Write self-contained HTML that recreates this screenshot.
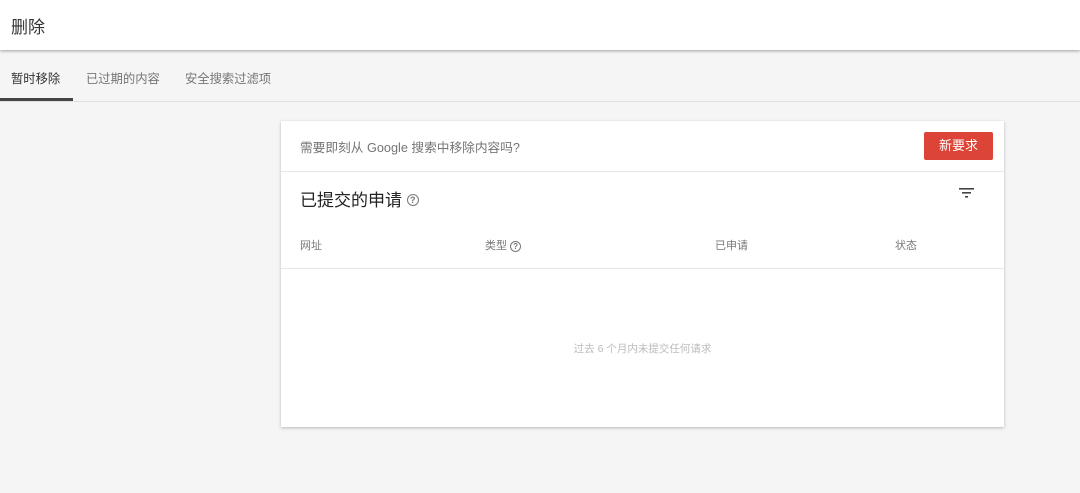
<!DOCTYPE html>
<html><head><meta charset="utf-8"><style>
*{margin:0;padding:0;box-sizing:border-box}
body{width:1080px;height:493px;background:#f5f5f5;font-family:"Liberation Sans","Noto Sans CJK SC",sans-serif;position:relative;overflow:hidden}
.top{position:absolute;left:0;top:0;width:1080px;height:50px;background:#fff;box-shadow:0 1px 3px rgba(0,0,0,.35)}
.top span{position:absolute;left:11px;top:13px;font-size:17px;color:#333}
.tabs{position:absolute;top:50px;left:0;width:1080px;height:52px;border-bottom:1px solid #e0e0e0}
.tab{position:absolute;top:19px;font-size:12.3px;color:#757575}
.ul{position:absolute;left:0;top:48px;width:73px;height:3px;background:#444}
.card{position:absolute;left:281px;top:121px;width:723px;height:306px;background:#fff;box-shadow:0 1px 3px rgba(0,0,0,.25)}
.a{position:absolute;left:19px;top:16px;font-size:12.7px;color:#757575}
.btn{position:absolute;left:643px;top:11px;width:69px;height:28px;background:#db4437;border-radius:2px;color:#fff;font-size:13px;text-align:center;line-height:28px}
.line{position:absolute;left:0;width:723px;height:1px;background:#e6e6e6}
.h{position:absolute;left:19px;top:65px;font-size:17px;color:#222}
.q{display:inline-block;width:12px;height:12px;border:1.3px solid #777;border-radius:50%;font-size:9px;line-height:10px;text-align:center;color:#777;vertical-align:middle;font-weight:bold}
.th{position:absolute;top:116px;font-size:11px;color:#777}
.empty{position:absolute;left:0;width:723px;top:220px;text-align:center;font-size:10.5px;color:#bbb}
</style></head><body>
<div class="top"><span>删除</span></div>
<div class="tabs">
<div class="tab" style="left:11px;color:#333">暂时移除</div>
<div class="tab" style="left:86px">已过期的内容</div>
<div class="tab" style="left:185px">安全搜索过滤项</div>
<div class="ul"></div>
</div>
<div class="card">
<div class="a">需要即刻从 Google 搜索中移除内容吗?</div>
<div class="btn">新要求</div>
<div class="line" style="top:50px"></div>
<div class="h">已提交的申请 <span class="q" style="margin-top:-3px">?</span></div>
<svg style="position:absolute;left:678px;top:66px" width="16" height="12"><rect x="0" y="1" width="15" height="1.6" fill="#444"/><rect x="3" y="5" width="9" height="1.6" fill="#444"/><rect x="6" y="9" width="3" height="1.6" fill="#444"/></svg>
<div class="th" style="left:19px">网址</div>
<div class="th" style="left:204px">类型 <span class="q" style="width:11px;height:11px;font-size:8px;line-height:9px">?</span></div>
<div class="th" style="left:434px">已申请</div>
<div class="th" style="left:614px">状态</div>
<div class="line" style="top:147px"></div>
<div class="empty">过去 6 个月内未提交任何请求</div>
</div>
</body></html>
